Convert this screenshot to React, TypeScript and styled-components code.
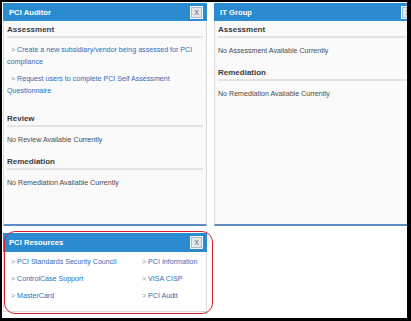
import React from "react";
import styled, { createGlobalStyle } from "styled-components";

const Global = createGlobalStyle`
  html, body { margin: 0; padding: 0; background: #000; }
  body {
    width: 411px;
    height: 321px;
    overflow: hidden;
    font-family: "Liberation Sans", Arial, sans-serif;
  }
`;

const Frame = styled.div`
  margin: 2px 0 0 2px;
  width: 405px;
  height: 316px;
  box-sizing: border-box;
  padding: 1px 0 0 1px;
  background: #fff;
  overflow: hidden;
  display: grid;
  grid-template-columns: 204px 204px;
  grid-template-rows: 223px auto;
  column-gap: 7px;
  row-gap: 7px;
  align-content: start;
`;

const Panel = styled.section`
  display: flex;
  flex-direction: column;
  min-width: 0;
`;

const Header = styled.header<{ $h?: number }>`
  height: ${(p) => p.$h ?? 18}px;
  flex: none;
  background: #2b8bd1;
  display: flex;
  align-items: center;
  justify-content: space-between;
  padding: 0 4px 0 6px;
  box-sizing: border-box;
`;

const Title = styled.h2`
  margin: 0;
  color: #fff;
  font-size: 7.6px;
  font-weight: bold;
  letter-spacing: 0.05px;
`;

const Close = styled.button`
  width: 13px;
  height: 13px;
  padding: 0;
  margin: 0;
  box-sizing: border-box;
  border: 1px solid #f4f7fa;
  background: #e3e7ea;
  box-shadow: inset 0 0 0 1px #a9bccd;
  color: #5a5a5a;
  font-family: "Liberation Sans", Arial, sans-serif;
  font-size: 7px;
  line-height: 11px;
  text-align: center;
  display: flex;
  align-items: center;
  justify-content: center;
`;

const Body = styled.div`
  flex: 1;
  background: #fafafa;
  border-left: 1px solid #dadada;
  border-right: 1px solid #dadada;
  border-bottom: 2px solid #5d8dc0;
  padding: 0 3px;
  overflow: hidden;
`;

const Heading = styled.h3`
  margin: 10px 0 0;
  &:first-child { margin-top: 3px; }
  font-size: 8px;
  line-height: 12px;
  font-weight: bold;
  color: #3a3a3a;
  border-bottom: 2px solid #e3e3e3;
`;

const Note = styled.p`
  margin: 7px 0 0;
  font-size: 7.1px;
  line-height: 12px;
  color: #4a4a4a;
`;

const LinkList = styled.ul`
  list-style: none;
  margin: 6px 0 0;
  padding: 0 0 1px;
`;

const Item = styled.li`
  font-size: 7.1px;
  line-height: 12px;
  margin-bottom: 5px;
`;

const Arrow = styled.span`
  margin: 0 2px 0 4px;
  color: #8a8f96;
  font-size: 7px;
`;

const A = styled.a`
  color: #2f6db8;
  text-decoration: none;
`;

const ResourceWrap = styled.div`
  position: relative;
  &::after {
    content: "";
    position: absolute;
    left: 1px;
    top: -2px;
    right: -6px;
    bottom: -2px;
    border: 1.5px solid #d3222f;
    border-radius: 11px;
    pointer-events: none;
  }
`;

const ResBody = styled.div`
  background: #fff;
  border-left: 1px solid #dadada;
  border-right: 1px solid #dadada;
  border-bottom: 1px solid #dadada;
  padding: 4px 3px 9px;
  display: grid;
  grid-template-columns: 131px 1fr;
  row-gap: 5px;
`;

const ResItem = styled.div`
  font-size: 7.1px;
  line-height: 12px;
  white-space: nowrap;
`;

const LinkItem = ({ children }: { children: React.ReactNode }) => (
  <Item>
    <Arrow>&gt;</Arrow>
    <A href="#">{children}</A>
  </Item>
);

const Res = ({ children }: { children: React.ReactNode }) => (
  <ResItem>
    <Arrow>&gt;</Arrow>
    <A href="#">{children}</A>
  </ResItem>
);

export default function App() {
  return (
    <>
      <Global />
      <Frame>
        <Panel>
          <Header>
            <Title>PCI Auditor</Title>
            <Close>X</Close>
          </Header>
          <Body>
            <Heading>Assessment</Heading>
            <LinkList>
              <LinkItem>Create a new subsidiary/vendor being assessed for PCI compliance</LinkItem>
              <LinkItem>Request users to complete PCI Self Assessment Questionnaire</LinkItem>
            </LinkList>
            <Heading>Review</Heading>
            <Note>No Review Available Currently</Note>
            <Heading>Remediation</Heading>
            <Note>No Remediation Available Currently</Note>
          </Body>
        </Panel>
        <Panel>
          <Header>
            <Title>IT Group</Title>
            <Close>X</Close>
          </Header>
          <Body>
            <Heading>Assessment</Heading>
            <Note>No Assessment Available Currently</Note>
            <Heading>Remediation</Heading>
            <Note>No Remediation Available Currently</Note>
          </Body>
        </Panel>
        <ResourceWrap>
          <Panel>
            <Header $h={19}>
              <Title>PCI Resources</Title>
              <Close>X</Close>
            </Header>
            <ResBody>
              <Res>PCI Standards Security Council</Res>
              <Res>PCI Information</Res>
              <Res>ControlCase Support</Res>
              <Res>VISA CISP</Res>
              <Res>MasterCard</Res>
              <Res>PCI Audit</Res>
            </ResBody>
          </Panel>
        </ResourceWrap>
      </Frame>
    </>
  );
}
